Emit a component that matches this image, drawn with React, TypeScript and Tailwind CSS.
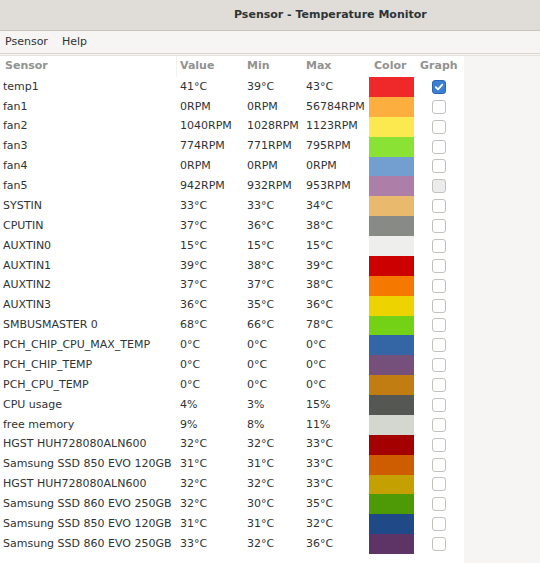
import React from "react";

type Row = { name: string; value: string; min: string; max: string; color: string; checked?: boolean; hover?: boolean };

const rows: Row[] = [
  { name: "temp1", value: "41°C", min: "39°C", max: "43°C", color: "#ef2929", checked: true },
  { name: "fan1", value: "0RPM", min: "0RPM", max: "56784RPM", color: "#fcaf3e" },
  { name: "fan2", value: "1040RPM", min: "1028RPM", max: "1123RPM", color: "#fce94f" },
  { name: "fan3", value: "774RPM", min: "771RPM", max: "795RPM", color: "#8ae234" },
  { name: "fan4", value: "0RPM", min: "0RPM", max: "0RPM", color: "#729fcf" },
  { name: "fan5", value: "942RPM", min: "932RPM", max: "953RPM", color: "#ad7fa8", hover: true },
  { name: "SYSTIN", value: "33°C", min: "33°C", max: "34°C", color: "#e9b96e" },
  { name: "CPUTIN", value: "37°C", min: "36°C", max: "38°C", color: "#888a85" },
  { name: "AUXTIN0", value: "15°C", min: "15°C", max: "15°C", color: "#eeeeec" },
  { name: "AUXTIN1", value: "39°C", min: "38°C", max: "39°C", color: "#cc0000" },
  { name: "AUXTIN2", value: "37°C", min: "37°C", max: "38°C", color: "#f57900" },
  { name: "AUXTIN3", value: "36°C", min: "35°C", max: "36°C", color: "#edd400" },
  { name: "SMBUSMASTER 0", value: "68°C", min: "66°C", max: "78°C", color: "#73d216" },
  { name: "PCH_CHIP_CPU_MAX_TEMP", value: "0°C", min: "0°C", max: "0°C", color: "#3465a4" },
  { name: "PCH_CHIP_TEMP", value: "0°C", min: "0°C", max: "0°C", color: "#75507b" },
  { name: "PCH_CPU_TEMP", value: "0°C", min: "0°C", max: "0°C", color: "#c17d11" },
  { name: "CPU usage", value: "4%", min: "3%", max: "15%", color: "#555753" },
  { name: "free memory", value: "9%", min: "8%", max: "11%", color: "#d3d7cf" },
  { name: "HGST HUH728080ALN600", value: "32°C", min: "32°C", max: "33°C", color: "#a40000" },
  { name: "Samsung SSD 850 EVO 120GB", value: "31°C", min: "31°C", max: "33°C", color: "#ce5c00" },
  { name: "HGST HUH728080ALN600", value: "32°C", min: "32°C", max: "33°C", color: "#c4a000" },
  { name: "Samsung SSD 860 EVO 250GB", value: "32°C", min: "30°C", max: "35°C", color: "#4e9a06" },
  { name: "Samsung SSD 850 EVO 120GB", value: "31°C", min: "31°C", max: "32°C", color: "#204a87" },
  { name: "Samsung SSD 860 EVO 250GB", value: "33°C", min: "32°C", max: "36°C", color: "#5c3566" },
];

function Check({ checked, hover }: { checked?: boolean; hover?: boolean }) {
  if (checked) {
    return (
      <div className="w-[14px] h-[14px] rounded-[3px] bg-[#3b7fd2] border border-[#2a66b0] flex items-center justify-center">
        <svg width="10" height="10" viewBox="0 0 10 10">
          <path d="M1.8 5.2 L4 7.4 L8.3 2.6" fill="none" stroke="#ffffff" strokeWidth="1.8" strokeLinecap="round" strokeLinejoin="round" />
        </svg>
      </div>
    );
  }
  return (
    <div
      className={
        hover
          ? "w-[14px] h-[14px] rounded-[3px] bg-[#ececec] border border-[#c4c1bd]"
          : "w-[14px] h-[14px] rounded-[3px] bg-white border border-[#c4c1bd]"
      }
    />
  );
}

export default function App() {
  return (
    <div
      className="w-[540px] h-[563px] overflow-hidden bg-[#f6f5f4] text-[11px] text-[#2e3436] flex flex-col"
      style={{ fontFamily: '"DejaVu Sans", Verdana, sans-serif' }}
    >
      <div className="h-[31px] shrink-0 bg-[#e0ddd9] border-b border-[#c6c2bd] flex items-center pl-[234px] font-bold text-[#2e3436]">
        Psensor - Temperature Monitor
      </div>
      <div className="h-[23px] shrink-0 bg-[#f6f5f4] flex items-center border-b border-[#dad7d3]">
        <span className="pl-[5px]">Psensor</span>
        <span className="pl-[14px]">Help</span>
      </div>
      <div className="h-[2px] shrink-0 bg-[#f6f5f4] border-b border-[#e4e1de]" />
      <div className="flex flex-1 min-h-0">
        <div className="w-[464px] bg-white flex flex-col">
          <div className="h-[21px] shrink-0 flex items-center font-bold text-[#929292]">
            <div className="w-[177px] pl-[5px] border-r border-[#f2f2f2] h-full flex items-center">Sensor</div>
            <div className="w-[67px] pl-[3px]">Value</div>
            <div className="w-[59px] pl-[3px]">Min</div>
            <div className="w-[63px] pl-[3px]">Max</div>
            <div className="w-[51px] pl-[8px]">Color</div>
            <div className="w-[47px] pl-[3px]">Graph</div>
          </div>
          {rows.map((r, i) => (
            <div key={i} className="h-[19.875px] shrink-0 flex items-center">
              <div className="w-[177px] pl-[3px] whitespace-nowrap">{r.name}</div>
              <div className="w-[67px] pl-[3px] whitespace-nowrap">{r.value}</div>
              <div className="w-[59px] pl-[3px] whitespace-nowrap">{r.min}</div>
              <div className="w-[63px] pl-[3px] whitespace-nowrap">{r.max}</div>
              <div className="w-[51px] h-full pl-[3px]">
                <div className="w-[45px] h-full" style={{ backgroundColor: r.color }} />
              </div>
              <div className="w-[47px] pl-[15px] flex items-center">
                <Check checked={r.checked} hover={r.hover} />
              </div>
            </div>
          ))}
        </div>
        <div className="flex-1 bg-[#f6f5f4]" />
      </div>
    </div>
  );
}
